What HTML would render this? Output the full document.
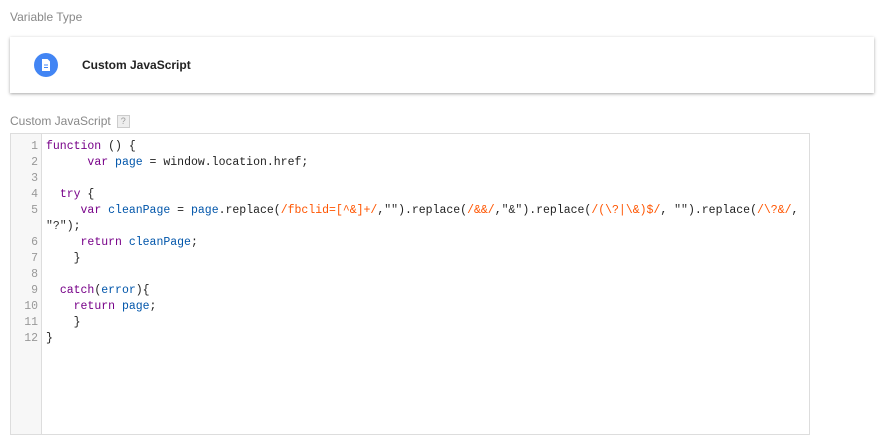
<!DOCTYPE html>
<html><head><style>
body{margin:0;width:884px;height:445px;background:#fff;font-family:"Liberation Sans",sans-serif;position:relative;overflow:hidden}
.lbl{position:absolute;left:10px;color:#888;font-size:12px}
.card{position:absolute;left:10px;top:37px;width:864px;height:56px;background:#fff;box-shadow:0 1px 3px rgba(0,0,0,.35)}
.ic{position:absolute;left:24px;top:16px;width:24px;height:24px;border-radius:50%;background:#4285f4}
.ct{position:absolute;left:72px;top:21px;font-size:12px;font-weight:bold;color:#222}
.q{display:inline-block;width:11px;height:11px;border:1px solid #ccc;background:#eee;font-size:9px;text-align:center;line-height:11px;margin-left:6px;vertical-align:1px;color:#999}
.ed{position:absolute;left:10px;top:133px;width:798px;height:300px;background:#fff;border:1px solid #ddd}
.gut{position:absolute;left:0;top:0;width:30px;height:300px;background:#f7f7f7;border-right:1px solid #ddd}
pre{margin:0;font-family:"Liberation Mono",monospace;font-size:11.5px;line-height:16px;position:absolute;top:5px}
.ln{left:0;width:27px;text-align:right;color:#999}
.code{left:35px;color:#222}
.k{color:#708}.v{color:#05a}.r{color:#f50}.s{color:#333}
</style></head><body>
<div class="lbl" style="top:10px">Variable Type</div>
<div class="card"><div class="ic"><svg width="24" height="24" viewBox="0 0 24 24"><path d="M8 6h5.5l2.5 2.5V18H8z" fill="#fff"/><path d="M10 12h4M10 14.5h4" stroke="#4285f4" stroke-width="1"/></svg></div><div class="ct">Custom JavaScript</div></div>
<div class="lbl" style="top:114px">Custom JavaScript<span class="q">?</span></div>
<div class="ed"><div class="gut"></div>
<pre class="ln">1
2
3
4
5

6
7
8
9
10
11
12</pre>
<pre class="code"><span class="k">function</span> () {
      <span class="k">var</span> <span class="v">page</span> = window.location.href;

  <span class="k">try</span> {
     <span class="k">var</span> <span class="v">cleanPage</span> = <span class="v">page</span>.replace(<span class="r">/fbclid=[^&amp;]+/</span>,<span class="s">""</span>).replace(<span class="r">/&amp;&amp;/</span>,<span class="s">"&amp;"</span>).replace(<span class="r">/(\?|\&amp;)$/</span>, <span class="s">""</span>).replace(<span class="r">/\?&amp;/</span>,
<span class="s">"?"</span>);
     <span class="k">return</span> <span class="v">cleanPage</span>;
    }

  <span class="k">catch</span>(<span class="v">error</span>){
    <span class="k">return</span> <span class="v">page</span>;
    }
}</pre>
</div>
</body></html>
